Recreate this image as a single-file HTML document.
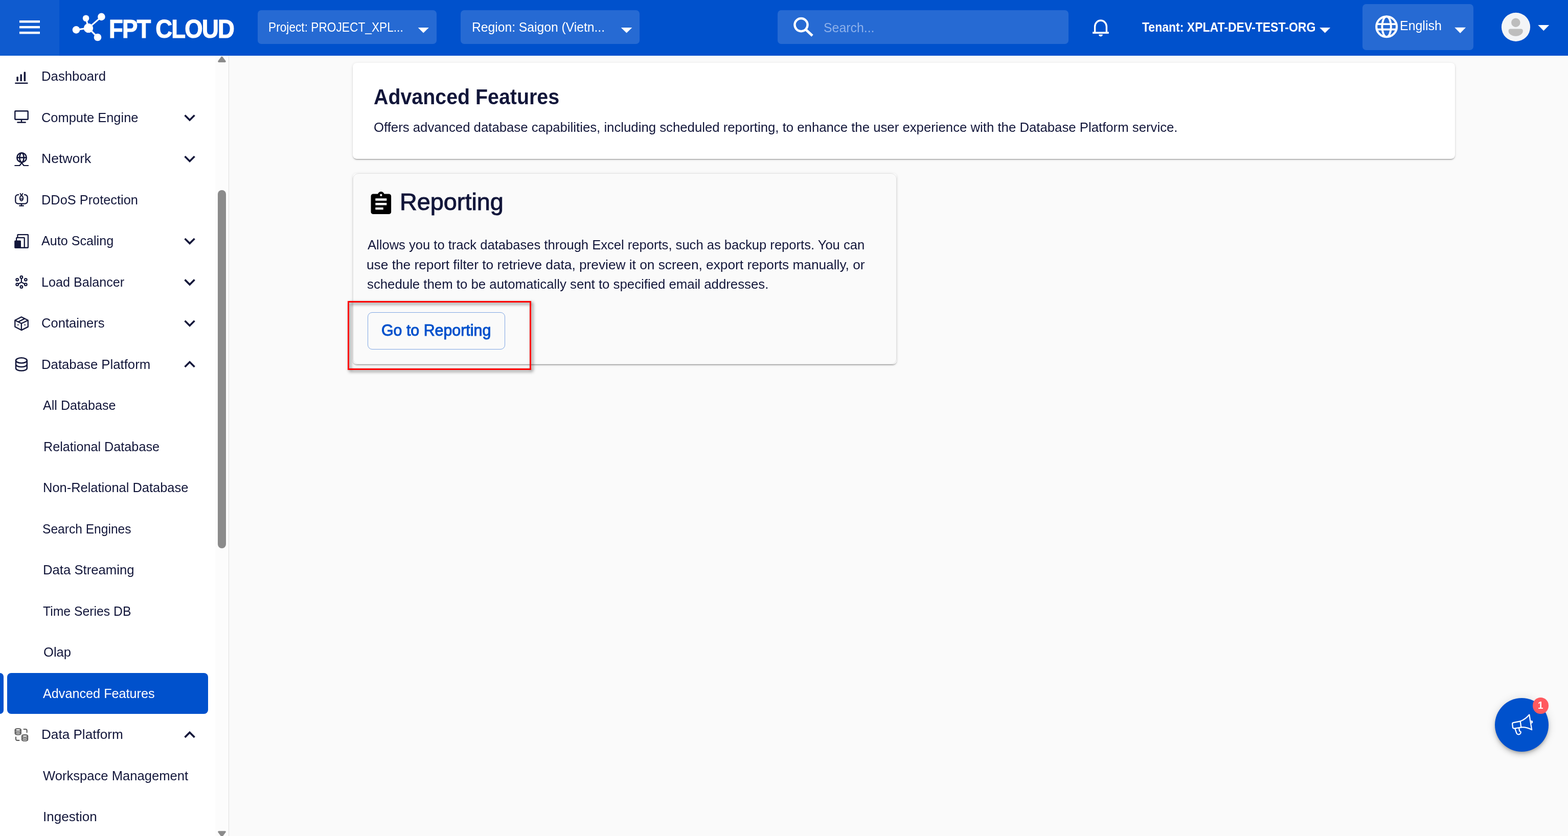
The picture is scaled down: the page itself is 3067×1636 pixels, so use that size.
<!DOCTYPE html>
<html lang="en">
<head>
<meta charset="utf-8">
<title>FPT Cloud - Advanced Features</title>
<style>
html,body{margin:0;padding:0;}
body{width:3067px;height:1636px;overflow:hidden;position:relative;background:#fafafa;font-family:"Liberation Sans",sans-serif;}
.a{position:absolute;}
.t{position:absolute;margin:0;padding:0;display:block;white-space:pre;line-height:1;font-weight:400;transform-origin:0 0;font-family:"Liberation Sans",sans-serif;}
svg{position:absolute;overflow:visible;}

.hdr{left:0;top:0;width:3067px;height:109px;background:#0051cc;}
.hb{left:0;top:0;width:116px;height:109px;background:rgba(255,255,255,.06);}
.box{background:rgba(255,255,255,.15);border-radius:7px;}
.side{left:0;top:109px;width:447px;height:1527px;background:#fff;border-right:1px solid #dedede;}
.track{left:421px;top:109px;width:26px;height:1527px;background:#fcfcfc;}
.thumb{left:426px;top:372px;width:16px;height:701px;border-radius:8px;background:#8b8b8b;}
.act{left:14px;top:1317px;width:393px;height:80px;border-radius:8px;background:#0051cc;}
.acc{left:0;top:1317px;width:7px;height:80px;border-radius:0 7px 7px 0;background:#0051cc;}
.card{border-radius:8px;box-shadow:0 3px 1px -2px rgba(0,0,0,.2),0 2px 2px 0 rgba(0,0,0,.14),0 1px 5px 0 rgba(0,0,0,.12);}
.c1{left:690px;top:123px;width:2156px;height:188px;background:#fff;}
.c2{left:689.5px;top:339px;width:1064px;height:374px;background:#fff;}
.c2i{left:689.5px;top:339px;width:1062px;height:372px;background:#fafafa;border:1px solid #e3e3e3;border-radius:11px;}
.btn{left:719px;top:610.8px;width:266.5px;height:71.4px;border:1.2px solid #7fa6e3;border-radius:9px;}
.red{left:679.6px;top:588.6px;width:353.4px;height:129px;border:3px solid #ff0000;filter:drop-shadow(3px 3px 3px rgba(0,0,0,.6));}
.fab{left:2924px;top:1366px;width:105px;height:105px;border-radius:50%;background:#0051cc;box-shadow:0 3px 5px -1px rgba(0,0,0,.2),0 6px 10px 0 rgba(0,0,0,.14),0 1px 18px 0 rgba(0,0,0,.12);}
.bdg{left:2998px;top:1365px;width:31.2px;height:31.6px;border-radius:50%;background:#ff5a5f;}

</style>
</head>
<body>
<nav>
<div class="a side"></div>
<div class="a track"></div>
<div class="a thumb"></div>
<div class="a act"></div>
<div class="a acc"></div>
<svg class="a" style="left:0;top:0" width="3067" height="1636" viewBox="0 0 3067 1636" aria-hidden="true">
<g fill="#12163a"><rect x="32.4" y="150" width="3.5" height="9" rx="1.2"/><rect x="39.5" y="145.2" width="3.4" height="13.8" rx="1.2"/><rect x="46.6" y="140.5" width="3.5" height="18.6" rx="1.2"/><rect x="29.1" y="161.4" width="25.6" height="2.6" rx="1.3"/></g>
<g fill="none" stroke="#12163a" stroke-width="2.4"><rect x="29.3" y="217.3" width="25.4" height="16.4" rx="1"/><line x1="42" y1="234" x2="42" y2="239"/><line x1="34.5" y1="239.5" x2="49.6" y2="239.5" stroke-linecap="round" stroke-width="2.6"/></g>
<g fill="none" stroke="#12163a" stroke-width="2.6"><circle cx="42.5" cy="308.4" r="9.2"/><ellipse cx="42.5" cy="308.4" rx="4.1" ry="9.2"/><line x1="33.2" y1="308.4" x2="51.8" y2="308.4"/><path d="M42.5,318.5L38.6,324H28.4M42.5,318.5L46.4,324H56" stroke-width="2.2"/></g>
<g fill="none" stroke="#12163a" stroke-width="2.3" stroke-linecap="round"><path d="M36.2,381.2H35.3a5,5 0 0 0 -5,5V393.6a5,5 0 0 0 5,5H48.8a5,5 0 0 0 5,-5V386.2a5,5 0 0 0 -5,-5H48"/><line x1="42" y1="399" x2="42" y2="402.5"/><line x1="38.2" y1="402.7" x2="45.9" y2="402.7"/><ellipse cx="42" cy="387.9" rx="3" ry="5" stroke-width="2.1"/><path d="M39.6,378.7L42,382.6L44.5,378.7M39.2,389.4H44.8" stroke-width="2"/></g>
<g stroke="#12163a" stroke-width="2.3"><rect x="34.45" y="459.05" width="20.5" height="25.7" rx="0.8" fill="#fff"/><rect x="32.15" y="465.15" width="15.6" height="19.6" rx="0.8" fill="#fff"/></g><rect x="28.2" y="470.5" width="12.8" height="15.4" rx="1.6" fill="#12163a"/>
<g fill="none" stroke="#12163a" stroke-width="2.2"><circle cx="41.9" cy="542.5" r="2.3"/><circle cx="33.7" cy="547.3" r="2.3"/><circle cx="50.3" cy="547.3" r="2.3"/><circle cx="33.7" cy="556.7" r="2.3"/><circle cx="50.3" cy="556.7" r="2.3"/><circle cx="41.9" cy="561.4" r="2.3"/><path d="M41.9,545.5V552.1L36,555.5M41.9,552.1L47.9,555.5"/></g>
<g fill="none" stroke="#12163a" stroke-width="2.3" stroke-linejoin="round"><path d="M41.9,620.3L54.8,626.8V639.6L41.9,646.1L29.3,639.6V626.8Z"/><path d="M29.3,626.8L41.9,633L54.8,626.8M41.9,633V646.1M35.3,630L48.6,623.4"/></g><circle cx="35.3" cy="635.8" r="1.2" fill="#12163a"/><circle cx="48.7" cy="635.8" r="1.2" fill="#12163a"/>
<g fill="none" stroke="#12163a" stroke-width="2.5"><ellipse cx="41.9" cy="705.4" rx="10.9" ry="5.1"/><path d="M31,705.4V720.5a10.9,5.1 0 0 0 21.8,0V705.4M31,713a10.9,5.1 0 0 0 21.8,0"/></g>
<g fill="none" stroke="#5c5c5c" stroke-width="2.1" stroke-linecap="round"><ellipse cx="35.25" cy="1428.4" rx="5.6" ry="2.4"/><path d="M29.65,1428.4V1435.3a5.6,2.4 0 0 0 11.2,0V1428.4M29.65,1431.9a5.6,2.4 0 0 0 11.2,0"/><ellipse cx="48.55" cy="1440.5" rx="5.6" ry="2.4"/><path d="M42.949999999999996,1440.5V1447.3999999999999a5.6,2.4 0 0 0 11.2,0V1440.5M42.949999999999996,1444.0a5.6,2.4 0 0 0 11.2,0"/><path d="M46.5,1427H50a2.6,2.6 0 0 1 2.6,2.6V1433.3M31,1442.5V1446.3a2.6,2.6 0 0 0 2.6,2.6H37.4"/></g>
<polygon fill="#12163a" points="362.83,224.26 371.05,232.48 379.27,224.26 381.80,226.80 371.05,237.55 360.30,226.80"/>
<polygon fill="#12163a" points="362.83,304.72 371.05,312.94 379.27,304.72 381.80,307.26 371.05,318.01 360.30,307.26"/>
<polygon fill="#12163a" points="362.83,465.64 371.05,473.86 379.27,465.64 381.80,468.18 371.05,478.93 360.30,468.18"/>
<polygon fill="#12163a" points="362.83,546.10 371.05,554.32 379.27,546.10 381.80,548.64 371.05,559.39 360.30,548.64"/>
<polygon fill="#12163a" points="362.83,626.56 371.05,634.78 379.27,626.56 381.80,629.10 371.05,639.85 360.30,629.10"/>
<polygon fill="#12163a" points="362.83,719.20 371.05,710.99 379.27,719.20 381.80,716.67 371.05,705.92 360.30,716.67"/>
<polygon fill="#12163a" points="362.83,1444.14 371.05,1435.93 379.27,1444.14 381.80,1441.61 371.05,1430.86 360.30,1441.61"/>
<path d="M434,112L440.2,120.3H427.8Z" fill="#8b8b8b" stroke="#8b8b8b" stroke-width="3.2" stroke-linejoin="round"/>
<path d="M434,1636.2L440.2,1627.9H427.8Z" fill="#8b8b8b" stroke="#8b8b8b" stroke-width="3.2" stroke-linejoin="round"/>
</svg>
<a class="t" style="left:81.05px;top:137.00px;font-size:25.2px;color:#12163a;transform:scaleX(1.0225);">Dashboard</a>
<a class="t" style="left:81.19px;top:218.00px;font-size:25.2px;color:#12163a;transform:scaleX(1.0097);">Compute Engine</a>
<a class="t" style="left:80.99px;top:298.00px;font-size:25.2px;color:#12163a;transform:scaleX(1.0544);">Network</a>
<a class="t" style="left:81.09px;top:379.00px;font-size:25.2px;color:#12163a;transform:scaleX(1.0071);">DDoS Protection</a>
<a class="t" style="left:80.70px;top:459.00px;font-size:25.2px;color:#12163a;transform:scaleX(0.9979);">Auto Scaling</a>
<a class="t" style="left:81.10px;top:540.00px;font-size:25.2px;color:#12163a;transform:scaleX(0.9981);">Load Balancer</a>
<a class="t" style="left:81.19px;top:620.00px;font-size:25.2px;color:#12163a;transform:scaleX(1.0150);">Containers</a>
<a class="t" style="left:81.06px;top:701.00px;font-size:25.2px;color:#12163a;transform:scaleX(1.0220);">Database Platform</a>
<a class="t" style="left:84.20px;top:781.00px;font-size:25.2px;color:#12163a;transform:scaleX(0.9972);">All Database</a>
<a class="t" style="left:84.50px;top:862.00px;font-size:25.2px;color:#12163a;transform:scaleX(1.0009);">Relational Database</a>
<a class="t" style="left:84.48px;top:942.00px;font-size:25.2px;color:#12163a;transform:scaleX(1.0104);">Non-Relational Database</a>
<a class="t" style="left:83.45px;top:1023.00px;font-size:25.2px;color:#12163a;transform:scaleX(0.9760);">Search Engines</a>
<a class="t" style="left:84.46px;top:1103.00px;font-size:25.2px;color:#12163a;transform:scaleX(1.0205);">Data Streaming</a>
<a class="t" style="left:83.52px;top:1184.00px;font-size:25.2px;color:#12163a;transform:scaleX(0.9832);">Time Series DB</a>
<a class="t" style="left:84.58px;top:1264.00px;font-size:25.2px;color:#12163a;transform:scaleX(1.0157);">Olap</a>
<a class="t" style="left:84.20px;top:1345.00px;font-size:25.2px;color:#fff;transform:scaleX(1.0009);">Advanced Features</a>
<a class="t" style="left:81.03px;top:1425.00px;font-size:25.2px;color:#12163a;transform:scaleX(1.0367);">Data Platform</a>
<a class="t" style="left:84.40px;top:1506.00px;font-size:25.2px;color:#12163a;transform:scaleX(1.0165);">Workspace Management</a>
<a class="t" style="left:84.43px;top:1586.00px;font-size:25.2px;color:#12163a;transform:scaleX(1.0333);">Ingestion</a>
</nav>
<header>
<div class="a hdr"></div>
<div class="a hb"></div>
<div class="a box" style="left:504px;top:20px;width:350px;height:66px"></div>
<div class="a box" style="left:901px;top:20px;width:350px;height:66px"></div>
<div class="a box" style="left:1521px;top:20px;width:569px;height:66px"></div>
<div class="a box" style="left:2665px;top:8px;width:217px;height:90px"></div>
<svg class="a" style="left:0;top:0" width="3067" height="1636" viewBox="0 0 3067 1636" aria-hidden="true">
<rect x="38" y="40" width="40" height="4.5" fill="#fff"/>
<rect x="38" y="50.9" width="40" height="4.5" fill="#fff"/>
<rect x="38" y="61.9" width="40" height="4.5" fill="#fff"/>
<g stroke="#fff" stroke-width="3.2" fill="#fff"><line x1="173" y1="54.9" x2="168.1" y2="35.7"/><line x1="173" y1="54.9" x2="198.4" y2="32.9"/><line x1="173" y1="54.9" x2="149" y2="58.4"/><line x1="173" y1="54.9" x2="191" y2="73"/></g><g fill="#fff"><circle cx="173" cy="54.9" r="9.2"/><circle cx="168.1" cy="35.7" r="6.3"/><circle cx="198.4" cy="32.9" r="7.3"/><circle cx="149" cy="58.4" r="7.3"/><circle cx="191" cy="73" r="7.3"/></g>
<polygon points="817.6,54 838.8,54 828.2,64.6" fill="#fff"/>
<polygon points="1214.7,54 1236.4,54 1225.5500000000002,64.6" fill="#fff"/>
<polygon points="2581.1,54.1 2602.1,54.1 2591.6,64.6" fill="#fff"/>
<polygon points="2845.2,53.8 2867.1,53.8 2856.1499999999996,65.1" fill="#fff"/>
<polygon points="3008.3,48.9 3030.2,48.9 3019.25,60.2" fill="#fff"/>
<circle cx="1567" cy="48.6" r="12.6" fill="none" stroke="#fff" stroke-width="4.4"/><line x1="1576.3" y1="58" x2="1589" y2="69.8" stroke="#fff" stroke-width="5"/>
<path d="M2141.6,63.5V52.3a11.4,12.3 0 0 1 22.8,0V63.5" fill="none" stroke="#fff" stroke-width="3.4"/><rect x="2137.1" y="62.3" width="31.7" height="3.6" fill="#fff"/><path d="M2149.2,67.6h7.6a3.8,3.8 0 0 1 -7.6,0z" fill="#fff"/>
<g fill="none" stroke="#fff" stroke-width="4.2"><circle cx="2712.1" cy="52.2" r="19.9"/><ellipse cx="2712.1" cy="52.2" rx="8.7" ry="19.9" stroke-width="3.8"/><line x1="2693" y1="47.1" x2="2731.2" y2="47.1" stroke-width="3.6"/><line x1="2693" y1="57.6" x2="2731.2" y2="57.6" stroke-width="3.6"/></g>
<circle cx="2965" cy="52.9" r="28.1" fill="#f3f4f6"/><circle cx="2964.8" cy="44.2" r="8.7" fill="#bdbdbd"/><path d="M2950.6,60.4a4,4 0 0 1 4,-4h20.2a4,4 0 0 1 4,4a14.1,10.4 0 0 1 -28.2,0z" fill="#bdbdbd"/>
</svg>
<span class="t" style="left:212.50px;top:32.00px;font-size:50.5px;color:#fff;transform:scaleX(0.9004);letter-spacing:-2px;font-weight:700;-webkit-text-stroke:1.2px #fff;">FPT CLOUD</span>
<span class="t" style="left:524.89px;top:40.00px;font-size:26.6px;color:#fff;transform:scaleX(0.8538);">Project: PROJECT_XPL...</span>
<span class="t" style="left:922.54px;top:40.00px;font-size:26.6px;color:#fff;transform:scaleX(0.9275);">Region: Saigon (Vietn...</span>
<span class="t" style="left:1610.89px;top:41.00px;font-size:26px;color:#8db0ea;transform:scaleX(0.9560);">Search...</span>
<span class="t" style="left:2233.50px;top:40.00px;font-size:26px;color:#fff;transform:scaleX(0.8853);font-weight:700;">Tenant: XPLAT-DEV-TEST-ORG</span>
<span class="t" style="left:2738.07px;top:38.00px;font-size:25.8px;color:#fff;transform:scaleX(0.9667);">English</span>
</header>
<main>
<section>
<div class="a card c1"></div>
<h1 class="t" style="left:731.09px;top:168.00px;font-size:43.4px;color:#12163a;transform:scaleX(0.9070);font-weight:700;">Advanced Features</h1>
<p class="t" style="left:731.39px;top:237.00px;font-size:25.5px;color:#12163a;transform:scaleX(1.0097);">Offers advanced database capabilities, including scheduled reporting, to enhance the user experience with the Database Platform service.</p>
</section>
<section>
<div class="a card c2"></div>
<div class="a c2i"></div>
<div class="a btn"></div>
<svg class="a" style="left:0;top:0" width="3067" height="1636" viewBox="0 0 3067 1636" aria-hidden="true">
<g transform="translate(718.9,372.9) scale(2.2)"><path fill="#000" d="M17,9H7V7H17M17,13H7V11H17M14,17H7V15H14M12,3A1,1 0 0,1 13,4A1,1 0 0,1 12,5A1,1 0 0,1 11,4A1,1 0 0,1 12,3M19,3H14.82C14.4,1.84 13.3,1 12,1C10.7,1 9.6,1.84 9.18,3H5A2,2 0 0,0 3,5V19A2,2 0 0,0 5,21H19A2,2 0 0,0 21,19V5A2,2 0 0,0 19,3Z"/></g>
</svg>
<h2 class="t" style="left:781.97px;top:372.00px;font-size:46.3px;color:#12163a;transform:scaleX(1.0103);-webkit-text-stroke:1.0px #12163a;">Reporting</h2>
<span class="t" style="left:719.40px;top:467.00px;font-size:25.5px;color:#12163a;transform:scaleX(1.0027);">Allows you to track databases through Excel reports, such as backup reports. You can</span>
<span class="t" style="left:717.34px;top:506.00px;font-size:25.5px;color:#12163a;transform:scaleX(1.0298);">use the report filter to retrieve data, preview it on screen, export reports manually, or</span>
<span class="t" style="left:718.39px;top:544.00px;font-size:25.5px;color:#12163a;transform:scaleX(1.0111);">schedule them to be automatically sent to specified email addresses.</span>
<span class="t" style="left:746.32px;top:631.00px;font-size:31px;color:#0051cc;transform:scaleX(0.9792);-webkit-text-stroke:1.0px #0051cc;">Go to Reporting</span>
</section>
</main>
<aside>
<div class="a fab"></div>
<div class="a bdg"></div>
<svg class="a" style="left:0;top:0" width="3067" height="1636" viewBox="0 0 3067 1636" aria-hidden="true"><g fill="none" stroke="#fff" stroke-width="2.3" stroke-linejoin="round" stroke-linecap="round"><path d="M2991.3,1398.6L2996.1,1428.1Q2986,1422.5 2975.3,1423.3L2973.7,1411.5Q2983.5,1408 2991.3,1398.6Z"/><path d="M2973.7,1411.5L2960.2,1414.2a2.6,2.6 0 0 0 -2,3L2959,1423.4a2.6,2.6 0 0 0 3,2.2L2975.3,1423.3"/><path d="M2963.3,1425.6L2966.3,1434.3a4.3,4.3 0 0 0 8.3,-2.2L2972.2,1430.5L2971,1424.3"/><path d="M2995.2,1411.3a1.6,1.6 0 0 1 0.6,3.2"/></g></svg>
<span class="t" style="left:3007.93px;top:1371.00px;font-size:19.5px;color:#fff;transform:scaleX(0.9667);font-weight:700;">1</span>
</aside>
<div class="a red"></div>
</body>
</html>
